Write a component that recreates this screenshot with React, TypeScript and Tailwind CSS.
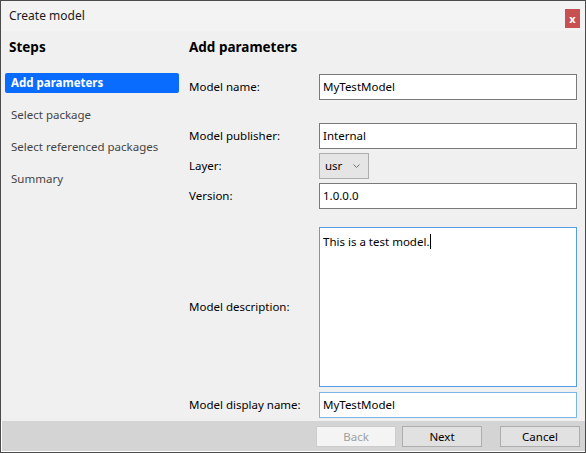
import React from 'react'

const font = { fontFamily: '"Noto Sans", "Open Sans", sans-serif' }

const steps = ['Add parameters', 'Select package', 'Select referenced packages', 'Summary']

const TextBox = ({ value, className = '' }: { value: string; className?: string }) => (
  <div className={`flex h-[26px] w-[258px] items-center border bg-white px-[3px] text-[11.5px] text-black ${className || 'border-[#7a7a7a]'}`}>
    {value}
  </div>
)

const Row = ({ label, children, className = '' }: { label: string; children: React.ReactNode; className?: string }) => (
  <div className={`flex items-center ${className}`}>
    <div className="w-[130px] text-[11.5px] text-black">{label}</div>
    {children}
  </div>
)

const Button = ({ label, disabled }: { label: string; disabled?: boolean }) => (
  <div
    className={`flex h-[21px] w-[80px] items-center justify-center border text-[11.5px] ${
      disabled ? 'border-[#cccccc] bg-[#f4f4f4] text-[#a0a0a0]' : 'border-[#adadad] bg-[#e1e1e1] text-black'
    }`}
  >
    {label}
  </div>
)

export default function App() {
  return (
    <div style={font} className="flex h-[453px] w-[586px] flex-col border border-[#4b4b4b] bg-[#f0f0f0]">
      {/* title bar */}
      <div className="flex h-[30px] shrink-0 items-center justify-between bg-[#f3f3f3] pl-[8px] pr-[5px]">
        <span className="text-[12px] text-[#1a1a1a]">Create model</span>
        <div className="mt-[5px] flex h-[19px] w-[15px] items-center justify-center bg-[#c75050] text-[11px] font-bold leading-none text-white">
          x
        </div>
      </div>

      {/* body */}
      <div className="flex flex-1">
        <div className="w-[183px] shrink-0 pl-[4px] pr-[5px]">
          <div className="mt-[6px] h-[20px] pl-[4px] text-[13.5px] font-bold leading-[20px] text-black">Steps</div>
          <div className="mt-[16px] flex flex-col gap-[12px]">
            {steps.map((s, i) => (
              <div
                key={s}
                className={`h-[20px] rounded-[2px] pl-[6px] text-[11.5px] leading-[20px] ${
                  i === 0 ? 'bg-[#0a6cff] font-bold text-white' : 'text-[#444444]'
                }`}
              >
                {s}
              </div>
            ))}
          </div>
        </div>

        <div className="flex flex-1 flex-col pl-[5px]">
          <div className="mt-[6px] h-[20px] text-[13.5px] font-bold leading-[20px] text-black">Add parameters</div>
          <Row label="Model name:" className="mt-[17px]">
            <TextBox value="MyTestModel" />
          </Row>
          <Row label="Model publisher:" className="mt-[23px]">
            <TextBox value="Internal" />
          </Row>
          <Row label="Layer:" className="mt-[4px]">
            <div className="flex h-[26px] w-[50px] items-center justify-between border border-[#adadad] bg-[#e5e5e5] pl-[5px] pr-[8px] text-[11.5px] text-black">
              <span>usr</span>
              <svg width="7" height="4" viewBox="0 0 7 4" fill="none" stroke="#707070" strokeWidth="1">
                <path d="M0.5 0.5 L3.5 3.5 L6.5 0.5" />
              </svg>
            </div>
          </Row>
          <Row label="Version:" className="mt-[4px]">
            <TextBox value="1.0.0.0" />
          </Row>
          <Row label="Model description:" className="mt-[18px]">
            <div className="h-[160px] w-[258px] border border-[#569de5] bg-white px-[3px] pt-[3px] text-[11.5px] text-black">
              This is a test model.
              <span className="ml-[1px] inline-block h-[15px] w-px translate-y-[3px] bg-black" />
            </div>
          </Row>
          <Row label="Model display name:" className="mt-[5px]">
            <TextBox value="MyTestModel" className="border-[#7eb4ea]" />
          </Row>
        </div>
      </div>

      {/* footer */}
      <div className="flex h-[31px] shrink-0 items-start justify-end gap-[6px] border-b border-l border-white bg-[#d4d4d4] pr-[5px] pt-[5px]">
        <Button label="Back" disabled />
        <Button label="Next" />
        <div className="w-[6px]" />
        <Button label="Cancel" />
      </div>
    </div>
  )
}
